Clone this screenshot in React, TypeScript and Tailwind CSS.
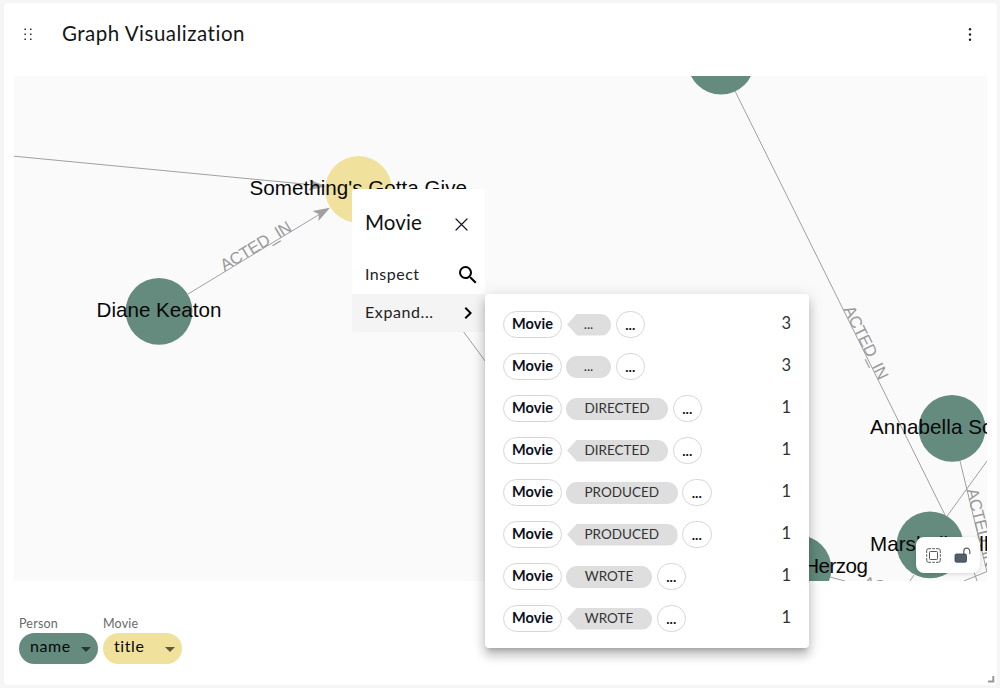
import React from "react";

type Relation = {
  label: string;
  incoming: boolean;
  width: string;
  count: number;
};

const relations: Relation[] = [
  { label: "...", incoming: true, width: "w-[45px]", count: 3 },
  { label: "...", incoming: false, width: "w-[45px]", count: 3 },
  { label: "DIRECTED", incoming: false, width: "w-[102px]", count: 1 },
  { label: "DIRECTED", incoming: true, width: "w-[102px]", count: 1 },
  { label: "PRODUCED", incoming: false, width: "w-[111.5px]", count: 1 },
  { label: "PRODUCED", incoming: true, width: "w-[111.5px]", count: 1 },
  { label: "WROTE", incoming: false, width: "w-[86px]", count: 1 },
  { label: "WROTE", incoming: true, width: "w-[86px]", count: 1 },
];

function RelationRow({ label, incoming, width, count }: Relation) {
  const shape = incoming
    ? "rounded-r-full [clip-path:polygon(11px_0,100%_0,100%_100%,11px_100%,1px_50%)]"
    : "rounded-full";
  return (
    <div className="flex h-[42px] items-center pr-[18px] pl-[18px]">
      <span className="flex h-[27px] w-[59px] items-center justify-center rounded-full border border-[#d6d6d6] text-[14.5px] font-bold tracking-[0.1px] text-[#0b0f1c]">
        Movie
      </span>
      <span
        className={`mt-px ml-1 flex h-[22px] items-center justify-center bg-[#dedede] text-[13.5px] text-[#333] ${width} ${shape}`}
      >
        {label}
      </span>
      <span className="ml-[4.5px] flex h-[27px] w-[29.5px] items-center justify-center rounded-full border border-[#d6d6d6] text-[14px] font-bold text-[#0b0f1c]">
        ...
      </span>
      <span className="-mt-px ml-auto text-[16.5px] text-[#333]">{count}</span>
    </div>
  );
}

function Graph() {
  return (
    <svg
      className="block h-[505px] w-[973px] bg-[#fafafa]"
      viewBox="14 76 973 505"
      fontFamily="'Liberation Sans', Arial, sans-serif"
    >
      <g stroke="#a0a0a0" strokeWidth="1" fill="none">
        <path d="M14 156.2 L316 185.2" />
        <path d="M188 294 L320 214" />
        <path d="M440 300 L500 381" />
        <path d="M735 91 L948 521" />
        <path d="M987 461 L945 519" />
        <path d="M960 461 L987 572" />
        <path d="M830 577 L845 581" />
        <path d="M914 575 L910 581" />
        <path d="M964 581 L987 571.5" />
        <path d="M974 572 L977 581" />
      </g>
      <g fill="#a0a0a0">
        <path d="M326 186.2 L309 179.5 L313 185 L308 190.5 Z" />
        <path d="M330 207.7 L312.5 211 L319 214.3 L318.5 221 Z" />
      </g>
      <g fill="#648b7e">
        <circle cx="159" cy="311.3" r="33.4" />
        <circle cx="721" cy="61.2" r="33.4" />
        <circle cx="952" cy="428.4" r="33.4" />
        <circle cx="930" cy="544.8" r="33.4" />
        <circle cx="798" cy="568.5" r="33.4" />
      </g>
      <circle cx="358.5" cy="189.5" r="33.4" fill="#f0e19d" />
      <g fill="#999" fontSize="16.7">
        <text transform="translate(224.5 271.6) rotate(-31.2)" textLength="80">ACTED_IN</text>
        <text transform="translate(843.3 309.3) rotate(63.6)" textLength="80">ACTED_IN</text>
        <text transform="translate(966.5 490) rotate(76.2)" textLength="80">ACTED_IN</text>
        <text transform="translate(862 587) rotate(15)" textLength="80">ACTED_IN</text>
      </g>
      <g fill="#080808" fontSize="20.6">
        <text x="96.5" y="317" textLength="125">Diane Keaton</text>
        <text x="249.5" y="195.3" textLength="217.5">Something's Gotta Give</text>
        <text x="870" y="434.3" textLength="164">Annabella Sciorra</text>
        <text x="870" y="550.6" textLength="118.5">Marshall Bell</text>
        <text x="735" y="573.4" textLength="133">Werner Herzog</text>
      </g>
    </svg>
  );
}

function NodeMenu() {
  return (
    <div className="absolute top-[189px] left-[352px] h-[143px] w-[133px] rounded-[3px] bg-white text-[#101010]">
      <div className="flex h-[67px] items-center justify-between pr-4 pl-[13px]">
        <span className="text-[20.5px] tracking-[0.1px]">Movie</span>
        <svg className="mt-1 h-[15px] w-[15px]" viewBox="0 0 15 15" fill="none" stroke="#101828" strokeWidth="1.2" strokeLinecap="round">
          <path d="M2 2 13 13M13 2 2 13" />
        </svg>
      </div>
      <div className="flex h-[38px] items-center justify-between pr-[5px] pl-[13px]">
        <span className="-mt-0.5 text-base tracking-[0.5px] text-[#222]">Inspect</span>
        <svg className="h-6 w-6" viewBox="0 0 24 24" fill="#000">
          <path d="M15.5 14h-.79l-.28-.27A6.47 6.47 0 0 0 16 9.5 6.5 6.5 0 1 0 9.5 16c1.61 0 3.09-.59 4.23-1.57l.27.28v.79l5 4.99L20.49 19l-4.99-5zm-6 0C7.01 14 5 11.99 5 9.5S7.01 5 9.5 5 14 7.01 14 9.5 11.99 14 9.5 14z" />
        </svg>
      </div>
      <div className="flex h-[38px] items-center justify-between rounded-b-[3px] bg-[#f4f4f4] pr-[5px] pl-[13px]">
        <span className="-mt-0.5 text-base tracking-[0.6px] text-[#222]">Expand...</span>
        <svg className="h-6 w-6" viewBox="0 0 24 24" fill="#000">
          <path d="M10 6 8.59 7.41 13.17 12l-4.58 4.59L10 18l6-6z" />
        </svg>
      </div>
    </div>
  );
}

function ViewControls() {
  return (
    <div className="absolute top-[537px] left-[916px] flex h-[36px] w-[64px] items-center rounded-lg bg-white pl-[10px] shadow-[0_1px_5px_rgba(0,0,0,0.14)]">
      <svg className="h-[15px] w-[15px]" viewBox="0 0 15 15" fill="none" stroke="#55585f" strokeWidth="1">
        <rect x="3.5" y="3.5" width="8" height="8" rx=".8" />
        <path d="M.7 5V2.7q0-2 2-2H5M6.2.7h2.6M10 .7h2.3q2 0 2 2V5M14.3 6.2v2.6M14.3 10v2.3q0 2-2 2H10M8.8 14.3H6.2M5 14.3H2.7q-2 0-2-2V10M.7 8.8V6.2" />
      </svg>
      <svg className="ml-[13px] h-[18px] w-[18px]" viewBox="0 0 18 18" fill="none">
        <path d="M9.8 8V5.2a3 3 0 0 1 6 0V7.6" stroke="#555d6b" strokeWidth="1.2" strokeLinecap="round" />
        <rect x="1" y="8" width="11.5" height="8.2" rx="1.4" fill="#555d6b" stroke="#374151" strokeWidth=".8" />
      </svg>
    </div>
  );
}

function LegendItem({ type, property, tone }: { type: string; property: string; tone: string }) {
  return (
    <div className="flex w-[79px] flex-col">
      <span className="-mt-px h-[18px] text-[12.5px] leading-[17px] tracking-[0.2px] text-[#6a6a6a]">{type}</span>
      <div className={`flex h-[31px] items-center rounded-full pl-[11px] ${tone}`}>
        <span className="-mt-[6px] text-base tracking-[0.6px]">{property}</span>
        <svg className="mt-px mr-[7px] ml-auto h-[5px] w-[10px]" viewBox="0 0 10 5">
          <path d="M0 0h10L5 5z" fill="#000" fillOpacity=".6" />
        </svg>
      </div>
    </div>
  );
}

export default function App() {
  return (
    <div className="relative h-[688px] w-[1000px] overflow-hidden bg-[#f5f5f5] pt-[3px] pr-[3px] pb-[3px] pl-1 font-[Lato,sans-serif] text-[#080808]">
      <main className="flex h-[682px] w-[993px] flex-col rounded-[4px] bg-white">
        <header className="flex h-[73px] shrink-0 items-start pt-[19px] pr-[23px] pl-5">
          <svg className="mt-[6px] h-3 w-[9px]" viewBox="0 0 9 12" fill="#1f2937">
            {[1.2, 6.2, 11.2].map((y) => (
              <g key={y}>
                <rect x=".4" y={y - 0.75} width="1.5" height="1.5" rx=".3" />
                <rect x="6" y={y - 0.75} width="1.5" height="1.5" rx=".3" />
              </g>
            ))}
          </svg>
          <h1 className="-mt-px ml-[29px] text-[20.5px] leading-6 tracking-[0.5px] text-[#151515]">Graph Visualization</h1>
          <svg className="mt-[5px] ml-auto h-[15px] w-2" viewBox="0 0 8 15" fill="#182033">
            <circle cx="4" cy="2.3" r="1.2" />
            <circle cx="4" cy="7.5" r="1.2" />
            <circle cx="4" cy="12.7" r="1.2" />
          </svg>
        </header>
        <section className="ml-[10px]">
          <Graph />
        </section>
        <footer className="flex gap-[5px] pt-[35px] pl-[15px]">
          <LegendItem type="Person" property="name" tone="bg-[#648b7e]" />
          <LegendItem type="Movie" property="title" tone="bg-[#f0e19d]" />
        </footer>
        <svg className="mt-auto mr-[2px] mb-[2px] h-[7px] w-[7px] self-end" viewBox="0 0 7 7">
          <path d="M5.3 0v5.5H0" fill="none" stroke="#999" strokeWidth="2" />
        </svg>
      </main>
      <ViewControls />
      <NodeMenu />
      <div className="absolute top-[294px] left-[485px] flex h-[354px] w-[324px] flex-col rounded-[4px] bg-white pt-[9px] shadow-[0_5px_5px_-3px_rgba(0,0,0,0.2),0_8px_10px_1px_rgba(0,0,0,0.14),0_3px_14px_2px_rgba(0,0,0,0.12)]">
        {relations.map((relation, index) => (
          <RelationRow key={index} {...relation} />
        ))}
      </div>
    </div>
  );
}
